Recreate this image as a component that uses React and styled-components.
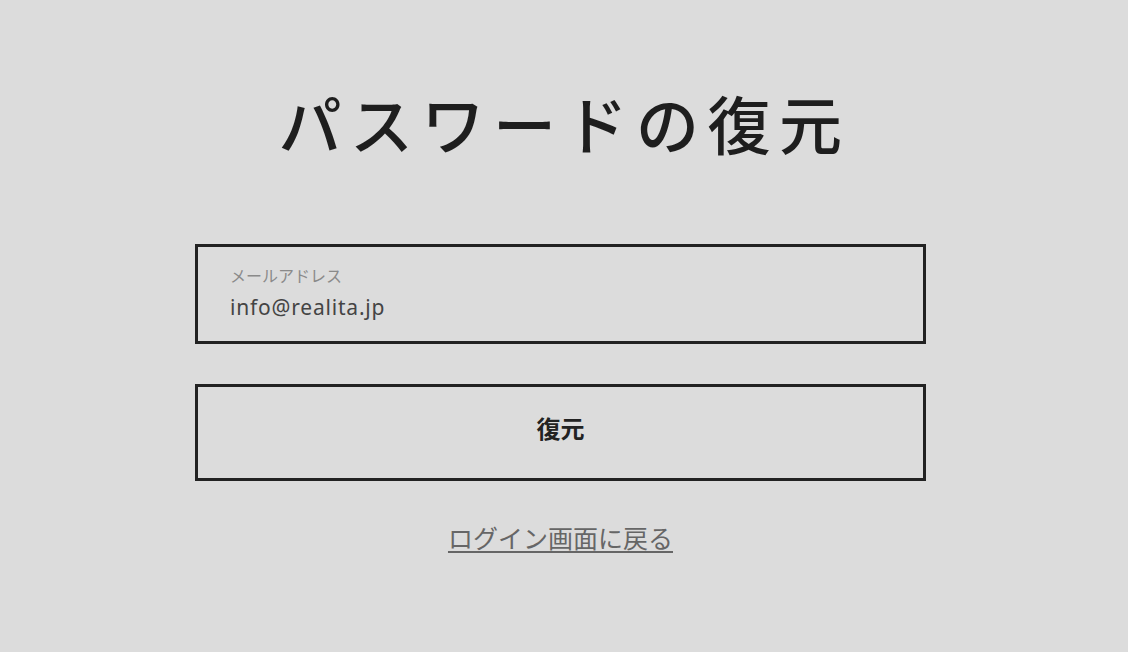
import React from "react";
import styled, { createGlobalStyle } from "styled-components";

const Global = createGlobalStyle`
  html, body { margin: 0; padding: 0; background: #dcdcdc; }
  body { font-family: "Noto Sans", "Noto Sans CJK JP", sans-serif; }
`;

const Page = styled.main`
  min-height: 652px;
  box-sizing: border-box;
  padding: 78px 7px 0 0;
  display: flex;
  flex-direction: column;
  align-items: center;
`;

const Title = styled.h1`
  margin: 0;
  font-family: "Noto Sans CJK JP", sans-serif;
  font-weight: 500;
  font-size: 63px;
  line-height: 88px;
  letter-spacing: 8.5px;
  color: #1e1e1e;
  padding-left: 8px;
`;

const Form = styled.form`
  margin-top: 78px;
  width: 731px;
  display: flex;
  flex-direction: column;
  gap: 40px;
`;

const Field = styled.label`
  box-sizing: border-box;
  height: 100px;
  border: 3px solid #222;
  padding: 16px 32px 0;
  display: flex;
  flex-direction: column;
`;

const FieldLabel = styled.span`
  font-family: "Noto Sans CJK JP", sans-serif;
  font-size: 16px;
  line-height: 24px;
  color: #8a8a8a;
`;

const FieldValue = styled.input`
  border: none;
  background: transparent;
  outline: none;
  padding: 0;
  margin-top: 5px;
  font-family: "Noto Sans", sans-serif;
  font-size: 21px;
  line-height: 30px;
  letter-spacing: 0.8px;
  color: #444;
`;

const Submit = styled.button`
  box-sizing: border-box;
  height: 97px;
  border: 3px solid #222;
  background: transparent;
  padding: 0 0 9px;
  font-family: "Noto Sans CJK JP", sans-serif;
  font-weight: 700;
  font-size: 24px;
  line-height: 32px;
  color: #222;
  cursor: pointer;
`;

const BackLink = styled.a`
  margin-top: 38px;
  font-family: "Noto Sans CJK JP", sans-serif;
  font-size: 25px;
  line-height: 36px;
  color: #666;
  text-decoration: underline;
  text-underline-offset: 3px;
  text-decoration-thickness: 2px;
`;

export default function App() {
  return (
    <>
      <Global />
      <Page>
        <Title>パスワードの復元</Title>
        <Form onSubmit={(e) => e.preventDefault()}>
          <Field>
            <FieldLabel>メールアドレス</FieldLabel>
            <FieldValue defaultValue="info@realita.jp" />
          </Field>
          <Submit type="submit">復元</Submit>
        </Form>
        <BackLink href="#">ログイン画面に戻る</BackLink>
      </Page>
    </>
  );
}
